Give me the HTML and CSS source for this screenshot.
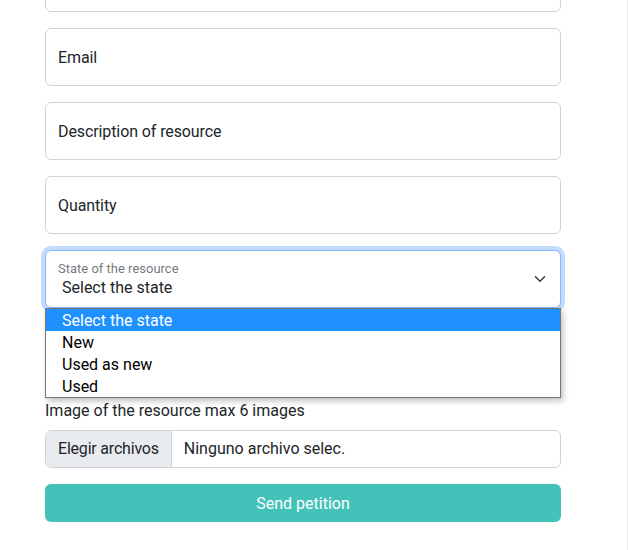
FILE: index.html
```html
<!DOCTYPE html>
<html>
<head>
<meta charset="utf-8">
<link rel="stylesheet" href="styles.css">
</head>
<body>
<div class="page">
  <form class="form">
    <div class="field field-cut"></div>
    <div class="field"><span class="ph">Email</span></div>
    <div class="field"><span class="ph">Description of resource</span></div>
    <div class="field"><span class="ph">Quantity</span></div>
    <div class="select-wrap">
      <div class="field select-field">
        <span class="float-label">State of the resource</span>
        <span class="select-value">Select the state</span>
        <svg class="chev" width="16" height="12" viewBox="0 0 16 16"><path d="m2 5 6 6 6-6" fill="none" stroke="#343a40" stroke-width="2" stroke-linecap="round" stroke-linejoin="round"/></svg>
      </div>
      <ul class="dropdown">
        <li class="opt active">Select the state</li>
        <li class="opt">New</li>
        <li class="opt">Used as new</li>
        <li class="opt">Used</li>
      </ul>
    </div>
    <div class="file-label">Image of the resource max 6 images</div>
    <div class="file-input">
      <span class="file-btn">Elegir archivos</span>
      <span class="file-name">Ninguno archivo selec.</span>
    </div>
    <button type="button" class="send">Send petition</button>
  </form>
</div>
</body>
</html>
```
FILE: styles.css
```css
html, body {
  margin: 0;
  padding: 0;
  background: #fff;
}
body {
  font-family: "Segoe UI", Roboto, "Noto Sans", sans-serif;
  font-size: 16px;
  line-height: 24px;
  color: #212529;
  overflow: hidden;
}
.page {
  width: 628px;
  height: 550px;
  border-right: 1px solid #ececec;
  padding-left: 45px;
  box-sizing: border-box;
  overflow: hidden;
}
.form {
  width: 516px;
  margin-top: -46px;
  display: flex;
  flex-direction: column;
}
.field {
  height: 58px;
  box-sizing: border-box;
  border: 1px solid #ced4da;
  border-radius: 6px;
  background: #fff;
  margin-bottom: 16px;
  display: flex;
  align-items: center;
  padding: 2px 12px 0;
}
.ph {
  color: #212529;
  letter-spacing: -0.1px;
}
.select-wrap {
  position: relative;
}
.select-field {
  border-color: #86b7fe;
  box-shadow: 0 0 0 4px rgba(13, 110, 253, 0.25);
  flex-direction: column;
  align-items: flex-start;
  justify-content: flex-start;
  position: relative;
  padding-top: 9px;
}
.float-label {
  font-size: 13px;
  line-height: 18px;
  color: rgba(33, 37, 41, 0.65);
}
.select-value {
  padding-left: 4px;
  line-height: 22px;
  margin-top: -1px;
}
.chev {
  position: absolute;
  right: 12px;
  top: 22px;
}
.dropdown {
  position: absolute;
  top: 58px;
  left: 0;
  width: 516px;
  box-sizing: border-box;
  margin: 0;
  padding: 0;
  list-style: none;
  background: #fff;
  border: 1px solid #767676;
  box-shadow: 2px 3px 6px rgba(0, 0, 0, 0.25);
  z-index: 5;
}
.opt {
  height: 22px;
  line-height: 24px;
  padding-left: 16px;
  color: #000;
}
.opt.active {
  background: #1e90ff;
  color: #fff;
}
.file-label {
  margin-top: 74px;
  margin-bottom: 8px;
  line-height: 24px;
  padding-top: 1px;
  height: 24px;
  box-sizing: border-box;
}
.file-input {
  display: flex;
  height: 38px;
  box-sizing: border-box;
  border: 1px solid #ced4da;
  border-radius: 6px;
  overflow: hidden;
  margin-bottom: 16px;
}
.file-btn {
  background: #e9ecef;
  border-right: 1px solid #ced4da;
  padding: 0 12px;
  display: flex;
  align-items: center;
  color: #212529;
  letter-spacing: -0.2px;
}
.file-name {
  padding: 0 12px;
  display: flex;
  align-items: center;
}
.send {
  height: 38px;
  border: none;
  border-radius: 6px;
  background: #43c2b9;
  color: #fff;
  font-family: inherit;
  font-size: 16px;
  padding: 0;
}
```
